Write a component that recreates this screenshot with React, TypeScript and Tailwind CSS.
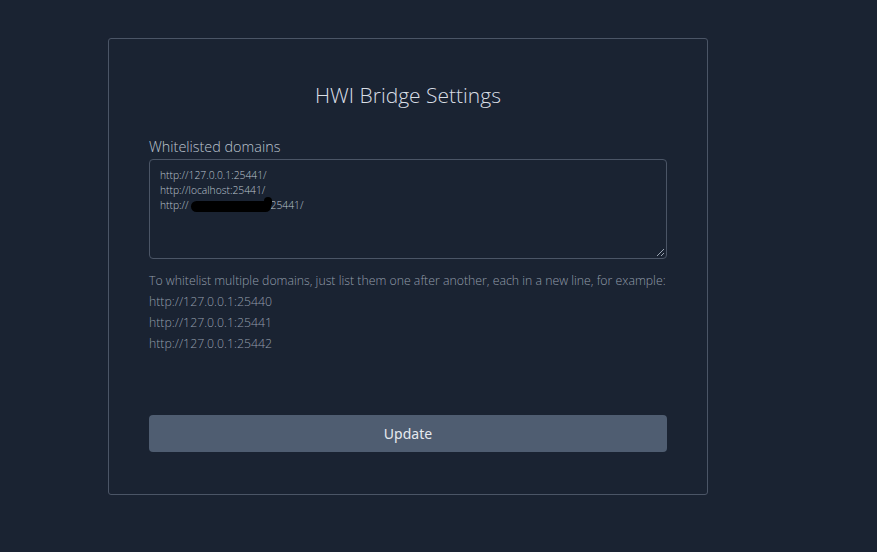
import React from "react";

export default function App() {
  return (
    <div
      className="min-h-[552px] w-full bg-[#1a2332] pt-[38px] pl-[108px]"
      style={{ fontFamily: '"Open Sans", "Noto Sans", sans-serif' }}
    >
      <div className="w-[600px] h-[457px] rounded-[3px] border border-[#4b5566] px-[40px] pt-[41px] flex flex-col">
        <h1 className="text-center text-[21px] leading-[30px] font-light text-[#d9dee5]">
          HWI Bridge Settings
        </h1>
        <label className="mt-[27px] text-[14.4px] leading-[20px] font-light text-[#bcc4cf]">
          Whitelisted domains
        </label>
        <div className="relative mt-[2px] h-[100px] rounded-[4px] border border-[#4b5566] pl-[10px] pt-[8px] text-[10.3px] leading-[15px] font-light text-[#bcc4cf]">
          <div>http://127.0.0.1:25441/</div>
          <div>http://localhost:25441/</div>
          <div className="flex items-center">
            <span>http://</span>
            <span className="relative ml-[2px] inline-block h-[11px] w-[80px] rounded-full bg-black mt-[2px]">
              <span className="absolute -right-[1px] -top-[4px] h-[10px] w-[8px] rounded-full bg-black" />
            </span>
            <span>25441/</span>
          </div>
          <svg className="absolute right-[1px] bottom-[1px]" width="9" height="9" viewBox="0 0 9 9">
            <path d="M8 1 L1 8 M8 5 L5 8" stroke="#9aa4b2" strokeWidth="1" />
          </svg>
        </div>
        <div className="mt-[11px] text-[12.3px] leading-[21px] font-light text-[#939daa]">
          <div className="whitespace-nowrap">To whitelist multiple domains, just list them one after another, each in a new line, for example:</div>
          <div>http://127.0.0.1:25440</div>
          <div>http://127.0.0.1:25441</div>
          <div>http://127.0.0.1:25442</div>
        </div>
        <button
          className="mt-[61px] h-[37px] w-full rounded-[4px] bg-[#4f5d71] text-[14px] text-[#e6eaef]"
          style={{ fontFamily: '"Noto Sans", "Open Sans", sans-serif' }}
        >
          Update
        </button>
      </div>
    </div>
  );
}
